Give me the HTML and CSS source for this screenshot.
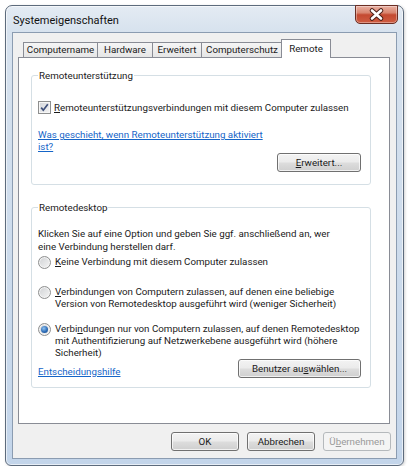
FILE: index.html
```html
<!DOCTYPE html>
<html lang="de">
<head>
<meta charset="utf-8">
<title>Systemeigenschaften</title>
<link rel="stylesheet" href="styles.css">
</head>
<body>
<div class="window">
  <div class="titlebar">
    <span class="title">Systemeigenschaften</span>
    <div class="close">
      <svg width="41" height="17" viewBox="0 0 41 17">
        <path d="M16 4.5 L25 12.5 M25 4.5 L16 12.5" stroke="#4a1f18" stroke-width="4.6" stroke-linecap="round"/>
        <path d="M16 4.5 L25 12.5 M25 4.5 L16 12.5" stroke="#ffffff" stroke-width="2.6" stroke-linecap="round"/>
      </svg>
    </div>
  </div>
  <div class="client">
    <div class="tabs">
      <div class="tab t-name">Computername</div>
      <div class="tab t-hw">Hardware</div>
      <div class="tab t-erw">Erweitert</div>
      <div class="tab t-cs">Computerschutz</div>
      <div class="tab active">Remote</div>
    </div>
    <div class="panel">
      <fieldset class="group g1">
        <legend>Remoteunterstützung</legend>
        <div class="check-row">
          <span class="checkbox">
            <svg width="11" height="11" viewBox="0 0 11 11"><path d="M2.2 5.6 L4.3 8.2 L8.8 2.2" fill="none" stroke="#3d4f7a" stroke-width="1.7"/></svg>
          </span>
          <span><u>R</u>emoteunterstützungsverbindungen mit diesem Computer zulassen</span>
        </div>
        <a class="link help-link" href="#">Was geschieht, wenn Remoteunterstützung aktiviert<br>ist?</a>
        <div class="btn-row">
          <button class="btn btn-erw"><u>E</u>rweitert...</button>
        </div>
      </fieldset>
      <fieldset class="group g2">
        <legend>Remotedesktop</legend>
        <p class="intro">Klicken Sie auf eine Option und geben Sie ggf. anschließend an, wer<br>eine Verbindung herstellen darf.</p>
        <div class="radio-row r1">
          <span class="radio"></span>
          <span><u>K</u>eine Verbindung mit diesem Computer zulassen</span>
        </div>
        <div class="radio-row r2">
          <span class="radio"></span>
          <span><u>V</u>erbindungen von Computern zulassen, auf denen eine beliebige<br>Version von Remotedesktop ausgeführt wird (weniger Sicherheit)</span>
        </div>
        <div class="radio-row r3">
          <span class="radio checked"><span class="dot"></span></span>
          <span>Verbi<u>n</u>dungen nur von Computern zulassen, auf denen Remotedesktop<br>mit Authentifizierung auf Netzwerkebene ausgeführt wird (höhere<br>Sicherheit)</span>
        </div>
        <div class="bottom-row">
          <a class="link" href="#">Entscheidungshilfe</a>
          <button class="btn btn-user">Benutzer au<u>s</u>wählen...</button>
        </div>
      </fieldset>
    </div>
    <div class="footer">
      <button class="btn btn-dlg">OK</button>
      <button class="btn btn-dlg">Abbrechen</button>
      <button class="btn btn-dlg" disabled>Ü<u>b</u>ernehmen</button>
    </div>
  </div>
</div>
</body>
</html>
```

FILE: styles.css
```css
* { box-sizing: border-box; }

body {
  margin: 0;
  background: #ffffff;
  font-family: Roboto, "Noto Sans", sans-serif;
  font-size: 9.75px;
  color: #1a1a1a;
}

.window {
  margin: 5px 0 0 5px;
  width: 399px;
  height: 461px;
  border: 1px solid #5d6b7c;
  border-radius: 7px 7px 6px 6px;
  background: linear-gradient(#e4ebf3 0, #d7e2ee 26px, #c3d5ea 100%);
  padding: 0 6px 6px;
  display: flex;
  flex-direction: column;
  box-shadow: inset 0 0 0 1px rgba(255,255,255,0.6), 1px 1px 3px rgba(0,0,0,0.18);
}

.titlebar {
  height: 26px;
  display: flex;
  align-items: flex-start;
  justify-content: space-between;
}

.title {
  margin: 8px 0 0 1px;
  font-size: 11px;
  line-height: 13px;
  color: #111;
}

.close {
  width: 43px;
  height: 19px;
  margin: -1px -1px 0 0;
  border: 1px solid #6b2e24;
  border-radius: 0 0 5px 5px;
  background: linear-gradient(#eab0a2 0%, #d98670 40%, #c44a31 52%, #cf5d42 100%);
  box-shadow: inset 0 0 0 1px rgba(255,255,255,0.35);
  display: flex;
}

.client {
  flex: 1;
  background: #f0f0f0;
  border: 1px solid #8b9cb1;
  padding: 6px 6px 0 5px;
  display: flex;
  flex-direction: column;
}

.tabs {
  display: flex;
  align-items: flex-end;
  height: 19px;
  margin: 0 0 -1px 5px;
  position: relative;
  z-index: 1;
}

.tab {
  height: 15px;
  margin: 0 0 1px -1px;
  border: 1px solid #898c95;
  border-bottom: none;
  background: linear-gradient(#f5f5f5, #e6e6e6);
  line-height: 14px;
  text-align: center;
  white-space: nowrap;
}

.t-name { width: 75px; margin-left: 0; }
.t-hw { width: 56px; }
.t-erw { width: 50px; }
.t-cs { width: 82px; }

.tab.active {
  width: 50px;
  height: 19px;
  margin: 0 0 0 -2px;
  padding-top: 2px;
  background: #ffffff;
  position: relative;
  z-index: 2;
}

.panel {
  height: 367px;
  flex: none;
  background: #ffffff;
  border: 1px solid #898c95;
  padding: 11px 18px 0 12px;
}

.group {
  margin: 0;
  min-width: 0;
  border: 1px solid #d5dfe5;
  border-radius: 3px;
}

.group legend {
  padding: 0 1px;
  line-height: 13px;
}

.g1 { padding: 19px 9px 12px 6px; }

.g2 {
  margin-top: 16px;
  padding: 13px 9px 9px 6px;
}

.check-row {
  display: flex;
  align-items: center;
  gap: 3px;
  height: 13px;
  line-height: 13px;
}

.checkbox {
  width: 13px;
  height: 13px;
  flex: none;
  border: 1px solid #8e8f8f;
  background: linear-gradient(135deg, #d3d6db 0%, #f4f4f4 100%);
  box-shadow: inset 0 0 0 1px #f6f6f6;
  display: flex;
}

.link {
  color: #1565c8;
  text-decoration: underline;
}

.help-link {
  display: block;
  margin-top: 15px;
  line-height: 11.5px;
}

.btn-row {
  display: flex;
  justify-content: flex-end;
  margin-top: 1px;
}

.btn {
  height: 19px;
  padding: 0;
  border: 1px solid #707070;
  border-radius: 3px;
  background: linear-gradient(#f3f3f3 0%, #ebebeb 48%, #dddddd 52%, #cfcfcf 100%);
  box-shadow: inset 0 0 0 1px rgba(255,255,255,0.7);
  font: inherit;
  color: #1a1a1a;
  line-height: 16px;
  text-align: center;
}

.btn:disabled {
  border-color: #b5b9bc;
  background: #f4f4f4;
  color: #9a9a9a;
  box-shadow: none;
}

.btn-erw { width: 84px; }
.btn-user { width: 123px; }
.btn-dlg { width: 68px; }

.intro {
  margin: 0;
  line-height: 13px;
}

.radio-row {
  display: flex;
  align-items: flex-start;
  gap: 4px;
  line-height: 12px;
}

.r1 { margin-top: 3px; }
.r2 { margin-top: 17px; }
.r3 { margin-top: 13px; }

.radio {
  width: 13px;
  height: 13px;
  flex: none;
  border: 1px solid #8e8f8f;
  border-radius: 50%;
  background: linear-gradient(135deg, #cfd1d4 0%, #f5f5f5 100%);
  box-shadow: inset 0 0 0 1px #f4f4f4;
  display: flex;
  align-items: center;
  justify-content: center;
}

.dot {
  width: 7px;
  height: 7px;
  border-radius: 50%;
  background: radial-gradient(circle at 40% 35%, #8fc3f2 0%, #2e6db7 55%, #1b4a88 100%);
}

.bottom-row {
  display: flex;
  justify-content: space-between;
  align-items: center;
}

.bottom-row .link { margin-top: 6px; }

.footer {
  display: flex;
  justify-content: flex-end;
  gap: 8px;
  margin: 8px -1px 0 0;
}
```
